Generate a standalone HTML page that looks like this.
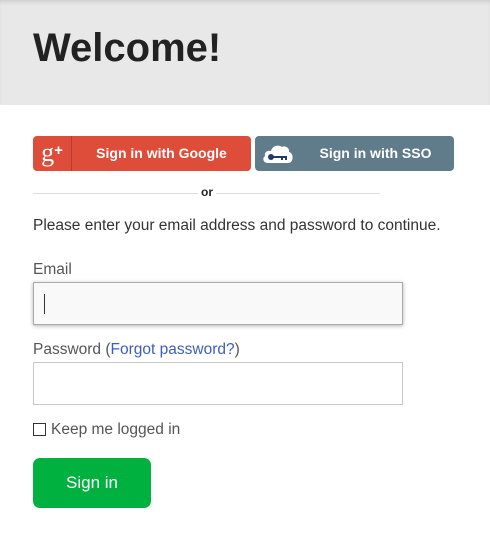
<!DOCTYPE html>
<html><head><meta charset="utf-8"><style>
*{margin:0;padding:0;box-sizing:border-box}
body{width:490px;height:559px;background:#fff;font-family:"Liberation Sans",sans-serif;position:relative;overflow:hidden;color:#333}
.hdr{position:absolute;left:0;top:0;width:490px;height:105px;background:#e8e8e8;box-shadow:inset 0 4px 4px -2px rgba(0,0,0,.12)}
.hdr h1{position:absolute;left:33px;top:26px;font-size:40px;font-weight:bold;color:#222;letter-spacing:0}
.btn{position:absolute;top:136px;height:35px;border-radius:4px;color:#fff;font-weight:bold;font-size:14px;line-height:35px}
.g{left:33px;width:218px;background:#de4c3a}
.g .ic{position:absolute;left:0;top:0;width:39px;height:35px;border-right:1px solid #b83b2c;font-family:"Liberation Serif",serif;font-weight:normal;font-size:26px;text-align:center;line-height:30px}
.g .ic sup{font-size:15px;font-family:"Liberation Sans",sans-serif;font-weight:bold;vertical-align:6px}
.g .t{position:absolute;left:39px;right:0;text-align:center}
.s{left:255px;width:199px;background:#607b89}
.s .t{position:absolute;left:42px;right:0;text-align:center}
.line{position:absolute;left:33px;top:193px;width:347px;height:1px;background:#ddd}
.or{position:absolute;left:198px;top:185px;background:#fff;padding:0 3px;font-size:12px;font-weight:bold;color:#222}
.p{position:absolute;left:33px;top:217px;font-size:15.5px;color:#333}
.lbl{position:absolute;left:33px;font-size:15.5px;color:#555}
.inp{position:absolute;left:33px;width:370px;height:43px;border:1px solid #c8c8c8;background:#fff}
.e{top:282px;background:#f9f9f9;border-color:#aaa;box-shadow:0 1px 4px rgba(0,0,0,.3)}
.cur{position:absolute;left:10px;top:11px;width:1px;height:20px;background:#333}
.cb{position:absolute;left:33px;top:423px;width:13px;height:13px;border:1px solid #333}
.sb{position:absolute;left:33px;top:458px;width:118px;height:50px;background:#00b140;border-radius:7px;color:#fff;font-size:17px;text-align:center;line-height:50px}
a{color:#3b5fc0;text-decoration:none}
</style></head><body>
<div class="hdr"><h1>Welcome!</h1></div>
<div class="btn g"><div class="ic">g<sup>+</sup></div><div class="t">Sign in with Google</div></div>
<div class="btn s">
<svg style="position:absolute;left:7px;top:6px" width="33" height="23" viewBox="0 0 33 23"><path d="M6 21 C1 21 0 16 3 14 C2 10 6 8 9 9 C10 4 16 2 20 5 C23 3 28 6 27 10 C32 11 32 21 26 21 Z" fill="#fff"/><circle cx="9" cy="15" r="3" fill="#1f3a6b"/><rect x="10" y="14" width="15" height="2" fill="#1f3a6b"/><rect x="19" y="15" width="2" height="3" fill="#1f3a6b"/><rect x="23" y="15" width="2" height="3" fill="#1f3a6b"/></svg>
<div class="t">Sign in with SSO</div></div>
<div class="line"></div><div class="or">or</div>
<div class="p">Please enter your email address and password to continue.</div>
<div class="lbl" style="top:261px">Email</div>
<div class="inp e"><div class="cur"></div></div>
<div class="lbl" style="top:341px">Password (<a>Forgot password?</a>)</div>
<div class="inp" style="top:362px"></div>
<div class="cb"></div>
<div class="lbl" style="left:51px;top:421px">Keep me logged in</div>
<div class="sb">Sign in</div>
</body></html>
